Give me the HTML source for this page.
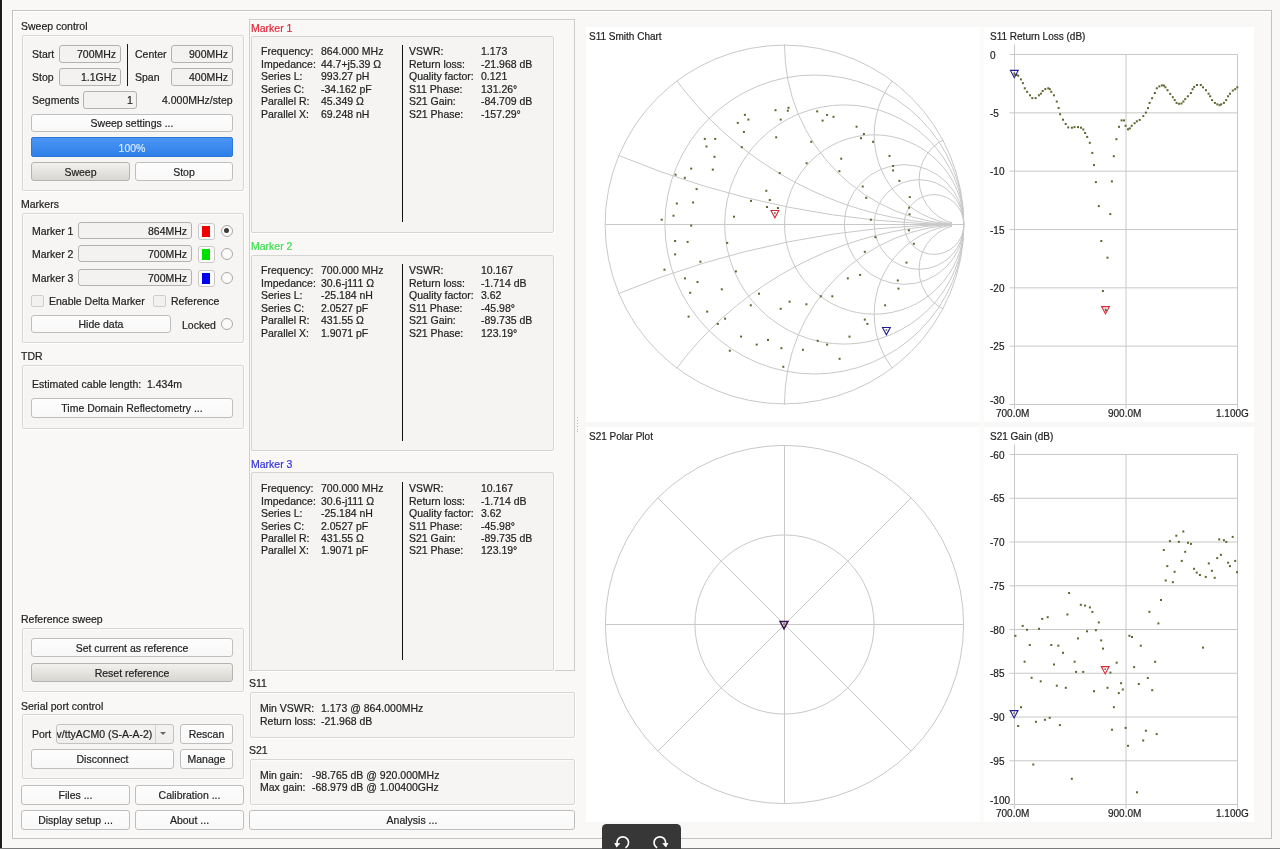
<!DOCTYPE html>
<html><head><meta charset="utf-8"><style>
html,body{margin:0;padding:0}
body{width:1280px;height:849px;position:relative;overflow:hidden;background:#f9f8f7;font-family:"Liberation Sans",sans-serif;font-size:10.5px;color:#222222;-webkit-font-smoothing:antialiased}
div{-webkit-text-stroke:0.2px currentColor}
</style></head><body>
<div style="position:absolute;left:0;top:0;width:2px;height:849px;background:#1d1b19"></div><div style="position:absolute;left:2px;top:0;width:1px;height:848px;background:#fdfdfd"></div><div style="position:absolute;left:0;top:848px;width:1280px;height:1px;background:#7a7a7a"></div><div style="position:absolute;left:12px;top:10px;width:1260px;height:829px;box-sizing:border-box;border:1px solid #c4c3c2"></div><div style="position:absolute;left:13px;top:11px;width:1258px;height:827px;box-sizing:border-box;border-top:1px solid #ffffff;border-left:1px solid #ffffff"></div><div style="position:absolute;left:21px;top:18.80px;line-height:14px;font-size:10.5px;color:#222222;white-space:pre;will-change:transform;">Sweep control</div><div style="position:absolute;left:22px;top:35px;width:222px;height:156px;box-sizing:border-box;border:1px solid #d8d7d6;background:#f6f5f4;border-radius:2px;box-shadow:1px 1px 0 #ffffff, inset 1px 1px 0 #fbfbfa"></div><div style="position:absolute;left:31.5px;top:46.75px;line-height:14px;font-size:10.5px;color:#222222;white-space:pre;will-change:transform;">Start</div><div style="position:absolute;left:59px;top:45px;width:62px;height:18px;box-sizing:border-box;border:1px solid #b3b2b1;background:#f3f2f1;border-radius:3px"></div><div style="position:absolute;right:1163.5px;top:47.00px;line-height:14px;font-size:10.5px;color:#222222;white-space:pre;text-align:right;will-change:transform;">700MHz</div><div style="position:absolute;left:31.5px;top:69.75px;line-height:14px;font-size:10.5px;color:#222222;white-space:pre;will-change:transform;">Stop</div><div style="position:absolute;left:59px;top:68px;width:62px;height:18px;box-sizing:border-box;border:1px solid #b3b2b1;background:#f3f2f1;border-radius:3px"></div><div style="position:absolute;right:1163.5px;top:70.00px;line-height:14px;font-size:10.5px;color:#222222;white-space:pre;text-align:right;will-change:transform;">1.1GHz</div><div style="position:absolute;left:127px;top:44px;width:1px;height:42px;box-sizing:border-box;background:#1a1a1a"></div><div style="position:absolute;left:134.5px;top:46.75px;line-height:14px;font-size:10.5px;color:#222222;white-space:pre;will-change:transform;">Center</div><div style="position:absolute;left:171px;top:45px;width:62px;height:18px;box-sizing:border-box;border:1px solid #b3b2b1;background:#f3f2f1;border-radius:3px"></div><div style="position:absolute;right:1051.5px;top:47.00px;line-height:14px;font-size:10.5px;color:#222222;white-space:pre;text-align:right;will-change:transform;">900MHz</div><div style="position:absolute;left:134.5px;top:69.75px;line-height:14px;font-size:10.5px;color:#222222;white-space:pre;will-change:transform;">Span</div><div style="position:absolute;left:171px;top:68px;width:62px;height:18px;box-sizing:border-box;border:1px solid #b3b2b1;background:#f3f2f1;border-radius:3px"></div><div style="position:absolute;right:1051.5px;top:70.00px;line-height:14px;font-size:10.5px;color:#222222;white-space:pre;text-align:right;will-change:transform;">400MHz</div><div style="position:absolute;left:31.5px;top:93.00px;line-height:14px;font-size:10.5px;color:#222222;white-space:pre;will-change:transform;">Segments</div><div style="position:absolute;left:83px;top:91px;width:54px;height:18px;box-sizing:border-box;border:1px solid #b3b2b1;background:#f3f2f1;border-radius:3px"></div><div style="position:absolute;right:1147.5px;top:93.00px;line-height:14px;font-size:10.5px;color:#222222;white-space:pre;text-align:right;will-change:transform;">1</div><div style="position:absolute;right:1047.5px;top:93.00px;line-height:14px;font-size:10.5px;color:#222222;white-space:pre;text-align:right;will-change:transform;">4.000MHz/step</div><div style="position:absolute;left:31px;top:114px;width:202px;height:18px;box-sizing:border-box;border:1px solid #bfbebd;background:linear-gradient(#fdfdfd,#f8f8f8);border-radius:3px"></div><div style="position:absolute;left:31px;width:202px;top:116.00px;line-height:14px;font-size:10.5px;color:#222222;white-space:pre;text-align:center;will-change:transform;">Sweep settings ...</div><div style="position:absolute;left:31px;top:137px;width:202px;height:20px;box-sizing:border-box;background:linear-gradient(#4b96f4,#2f7fe9);border:1px solid #2c76dc;border-radius:2px"></div><div style="position:absolute;left:31px;width:202px;top:140.50px;line-height:14px;font-size:10.5px;color:#d6e9ff;white-space:pre;text-align:center;will-change:transform;">100%</div><div style="position:absolute;left:31px;top:162px;width:99px;height:19px;box-sizing:border-box;border:1px solid #b5b4b3;background:linear-gradient(#f2f1ee,#d8d6d1);border-radius:3px"></div><div style="position:absolute;left:31px;width:99px;top:164.50px;line-height:14px;font-size:10.5px;color:#222222;white-space:pre;text-align:center;will-change:transform;">Sweep</div><div style="position:absolute;left:135px;top:162px;width:98px;height:19px;box-sizing:border-box;border:1px solid #bfbebd;background:linear-gradient(#fdfdfd,#f8f8f8);border-radius:3px"></div><div style="position:absolute;left:135px;width:98px;top:164.50px;line-height:14px;font-size:10.5px;color:#222222;white-space:pre;text-align:center;will-change:transform;">Stop</div><div style="position:absolute;left:21px;top:196.75px;line-height:14px;font-size:10.5px;color:#222222;white-space:pre;will-change:transform;">Markers</div><div style="position:absolute;left:22px;top:213px;width:222px;height:130px;box-sizing:border-box;border:1px solid #d8d7d6;background:#f6f5f4;border-radius:2px;box-shadow:1px 1px 0 #ffffff, inset 1px 1px 0 #fbfbfa"></div><div style="position:absolute;left:31.5px;top:223.50px;line-height:14px;font-size:10.5px;color:#222222;white-space:pre;will-change:transform;">Marker 1</div><div style="position:absolute;left:78px;top:222px;width:114px;height:17px;box-sizing:border-box;border:1px solid #b3b2b1;background:#f3f2f1;border-radius:3px"></div><div style="position:absolute;right:1092.5px;top:223.50px;line-height:14px;font-size:10.5px;color:#222222;white-space:pre;text-align:right;will-change:transform;">864MHz</div><div style="position:absolute;left:198px;top:223px;width:17px;height:17px;box-sizing:border-box;border:1px solid #c9c8c7;background:#fdfdfd;border-radius:3px"></div><div style="position:absolute;left:202px;top:226px;width:8px;height:11px;box-sizing:border-box;background:#f00000"></div><div style="position:absolute;left:220.8px;top:224.5px;width:12px;height:12px;box-sizing:border-box;border:1px solid #a9a8a7;border-radius:50%;background:#fafafa"></div><div style="position:absolute;left:224.3px;top:228.0px;width:5px;height:5px;border-radius:50%;background:#3a3a3a"></div><div style="position:absolute;left:31.5px;top:246.50px;line-height:14px;font-size:10.5px;color:#222222;white-space:pre;will-change:transform;">Marker 2</div><div style="position:absolute;left:78px;top:245px;width:114px;height:17px;box-sizing:border-box;border:1px solid #b3b2b1;background:#f3f2f1;border-radius:3px"></div><div style="position:absolute;right:1092.5px;top:246.50px;line-height:14px;font-size:10.5px;color:#222222;white-space:pre;text-align:right;will-change:transform;">700MHz</div><div style="position:absolute;left:198px;top:246px;width:17px;height:17px;box-sizing:border-box;border:1px solid #c9c8c7;background:#fdfdfd;border-radius:3px"></div><div style="position:absolute;left:202px;top:249px;width:8px;height:11px;box-sizing:border-box;background:#00e000"></div><div style="position:absolute;left:220.8px;top:247.5px;width:12px;height:12px;box-sizing:border-box;border:1px solid #a9a8a7;border-radius:50%;background:#fafafa"></div><div style="position:absolute;left:31.5px;top:270.50px;line-height:14px;font-size:10.5px;color:#222222;white-space:pre;will-change:transform;">Marker 3</div><div style="position:absolute;left:78px;top:269px;width:114px;height:17px;box-sizing:border-box;border:1px solid #b3b2b1;background:#f3f2f1;border-radius:3px"></div><div style="position:absolute;right:1092.5px;top:270.50px;line-height:14px;font-size:10.5px;color:#222222;white-space:pre;text-align:right;will-change:transform;">700MHz</div><div style="position:absolute;left:198px;top:270px;width:17px;height:17px;box-sizing:border-box;border:1px solid #c9c8c7;background:#fdfdfd;border-radius:3px"></div><div style="position:absolute;left:202px;top:273px;width:8px;height:11px;box-sizing:border-box;background:#0000f0"></div><div style="position:absolute;left:220.8px;top:271.5px;width:12px;height:12px;box-sizing:border-box;border:1px solid #a9a8a7;border-radius:50%;background:#fafafa"></div><div style="position:absolute;left:31px;top:295px;width:13px;height:12px;box-sizing:border-box;border:1px solid #cfcecd;background:#f2f1f0;border-radius:2px"></div><div style="position:absolute;left:48.5px;top:294.00px;line-height:14px;font-size:10.5px;color:#222222;white-space:pre;will-change:transform;">Enable Delta Marker</div><div style="position:absolute;left:153px;top:295px;width:13px;height:12px;box-sizing:border-box;border:1px solid #cfcecd;background:#f2f1f0;border-radius:2px"></div><div style="position:absolute;left:170.5px;top:294.00px;line-height:14px;font-size:10.5px;color:#222222;white-space:pre;will-change:transform;">Reference</div><div style="position:absolute;left:31px;top:315px;width:140px;height:18px;box-sizing:border-box;border:1px solid #bfbebd;background:linear-gradient(#fdfdfd,#f8f8f8);border-radius:3px"></div><div style="position:absolute;left:31px;width:140px;top:317.00px;line-height:14px;font-size:10.5px;color:#222222;white-space:pre;text-align:center;will-change:transform;">Hide data</div><div style="position:absolute;left:181.5px;top:317.50px;line-height:14px;font-size:10.5px;color:#222222;white-space:pre;will-change:transform;">Locked</div><div style="position:absolute;left:220.8px;top:318px;width:12px;height:12px;box-sizing:border-box;border:1px solid #a9a8a7;border-radius:50%;background:#fafafa"></div><div style="position:absolute;left:21px;top:349.00px;line-height:14px;font-size:10.5px;color:#222222;white-space:pre;will-change:transform;">TDR</div><div style="position:absolute;left:22px;top:365px;width:222px;height:64px;box-sizing:border-box;border:1px solid #d8d7d6;background:#f6f5f4;border-radius:2px;box-shadow:1px 1px 0 #ffffff, inset 1px 1px 0 #fbfbfa"></div><div style="position:absolute;left:31.5px;top:377.00px;line-height:14px;font-size:10.5px;color:#222222;white-space:pre;will-change:transform;">Estimated cable length:  1.434m</div><div style="position:absolute;left:31px;top:398px;width:202px;height:20px;box-sizing:border-box;border:1px solid #bfbebd;background:linear-gradient(#fdfdfd,#f8f8f8);border-radius:3px"></div><div style="position:absolute;left:31px;width:202px;top:401.00px;line-height:14px;font-size:10.5px;color:#222222;white-space:pre;text-align:center;will-change:transform;">Time Domain Reflectometry ...</div><div style="position:absolute;left:21px;top:612.00px;line-height:14px;font-size:10.5px;color:#222222;white-space:pre;will-change:transform;">Reference sweep</div><div style="position:absolute;left:22px;top:628px;width:222px;height:64px;box-sizing:border-box;border:1px solid #d8d7d6;background:#f6f5f4;border-radius:2px;box-shadow:1px 1px 0 #ffffff, inset 1px 1px 0 #fbfbfa"></div><div style="position:absolute;left:31px;top:638px;width:202px;height:19px;box-sizing:border-box;border:1px solid #bfbebd;background:linear-gradient(#fdfdfd,#f8f8f8);border-radius:3px"></div><div style="position:absolute;left:31px;width:202px;top:640.50px;line-height:14px;font-size:10.5px;color:#222222;white-space:pre;text-align:center;will-change:transform;">Set current as reference</div><div style="position:absolute;left:31px;top:663px;width:202px;height:19px;box-sizing:border-box;border:1px solid #b5b4b3;background:linear-gradient(#f2f1ee,#d8d6d1);border-radius:3px"></div><div style="position:absolute;left:31px;width:202px;top:665.50px;line-height:14px;font-size:10.5px;color:#222222;white-space:pre;text-align:center;will-change:transform;">Reset reference</div><div style="position:absolute;left:21px;top:699.00px;line-height:14px;font-size:10.5px;color:#222222;white-space:pre;will-change:transform;">Serial port control</div><div style="position:absolute;left:22px;top:714px;width:222px;height:65px;box-sizing:border-box;border:1px solid #d8d7d6;background:#f6f5f4;border-radius:2px;box-shadow:1px 1px 0 #ffffff, inset 1px 1px 0 #fbfbfa"></div><div style="position:absolute;left:31.5px;top:727.00px;line-height:14px;font-size:10.5px;color:#222222;white-space:pre;will-change:transform;">Port</div><div style="position:absolute;left:56px;top:724px;width:118px;height:20px;box-sizing:border-box;border:1px solid #c3c2c1;background:linear-gradient(#f4f3f2,#efeeed);border-radius:3px"></div><div style="position:absolute;left:57px;top:725px;width:95px;height:18px;overflow:hidden"><div style="position:absolute;right:0;top:2px;line-height:14px;font-size:10.5px;color:#222;white-space:pre;will-change:transform">/dev/ttyACM0 (S-A-A-2)</div></div><div style="position:absolute;left:155px;top:725px;width:1px;height:18px;box-sizing:border-box;background:#d0cfce"></div><div style="position:absolute;left:160px;top:732px;width:0;height:0;border-left:3.5px solid transparent;border-right:3.5px solid transparent;border-top:3.5px solid #666"></div><div style="position:absolute;left:180px;top:724px;width:53px;height:20px;box-sizing:border-box;border:1px solid #bfbebd;background:linear-gradient(#fdfdfd,#f8f8f8);border-radius:3px"></div><div style="position:absolute;left:180px;width:53px;top:727.00px;line-height:14px;font-size:10.5px;color:#222222;white-space:pre;text-align:center;will-change:transform;">Rescan</div><div style="position:absolute;left:31px;top:749px;width:143px;height:20px;box-sizing:border-box;border:1px solid #bfbebd;background:linear-gradient(#fdfdfd,#f8f8f8);border-radius:3px"></div><div style="position:absolute;left:31px;width:143px;top:752.00px;line-height:14px;font-size:10.5px;color:#222222;white-space:pre;text-align:center;will-change:transform;">Disconnect</div><div style="position:absolute;left:180px;top:749px;width:53px;height:20px;box-sizing:border-box;border:1px solid #bfbebd;background:linear-gradient(#fdfdfd,#f8f8f8);border-radius:3px"></div><div style="position:absolute;left:180px;width:53px;top:752.00px;line-height:14px;font-size:10.5px;color:#222222;white-space:pre;text-align:center;will-change:transform;">Manage</div><div style="position:absolute;left:21px;top:785px;width:109px;height:20px;box-sizing:border-box;border:1px solid #bfbebd;background:linear-gradient(#fdfdfd,#f8f8f8);border-radius:3px"></div><div style="position:absolute;left:21px;width:109px;top:788.00px;line-height:14px;font-size:10.5px;color:#222222;white-space:pre;text-align:center;will-change:transform;">Files ...</div><div style="position:absolute;left:135px;top:785px;width:109px;height:20px;box-sizing:border-box;border:1px solid #bfbebd;background:linear-gradient(#fdfdfd,#f8f8f8);border-radius:3px"></div><div style="position:absolute;left:135px;width:109px;top:788.00px;line-height:14px;font-size:10.5px;color:#222222;white-space:pre;text-align:center;will-change:transform;">Calibration ...</div><div style="position:absolute;left:21px;top:810px;width:109px;height:20px;box-sizing:border-box;border:1px solid #bfbebd;background:linear-gradient(#fdfdfd,#f8f8f8);border-radius:3px"></div><div style="position:absolute;left:21px;width:109px;top:813.00px;line-height:14px;font-size:10.5px;color:#222222;white-space:pre;text-align:center;will-change:transform;">Display setup ...</div><div style="position:absolute;left:135px;top:810px;width:109px;height:20px;box-sizing:border-box;border:1px solid #bfbebd;background:linear-gradient(#fdfdfd,#f8f8f8);border-radius:3px"></div><div style="position:absolute;left:135px;width:109px;top:813.00px;line-height:14px;font-size:10.5px;color:#222222;white-space:pre;text-align:center;will-change:transform;">About ...</div><div style="position:absolute;left:249px;top:19px;width:326px;height:652px;box-sizing:border-box;border:1px solid #cfcecd;background:#f9f8f7"></div><div style="position:absolute;left:251.2px;top:20.60px;line-height:14px;font-size:10.5px;color:#e0283a;white-space:pre;will-change:transform;">Marker 1</div><div style="position:absolute;left:251px;top:36px;width:303px;height:197px;box-sizing:border-box;border:1px solid #d6d5d4;background:#f5f4f3;border-radius:2px;box-shadow:1px 1px 0 #ffffff"></div><div style="position:absolute;left:261px;top:44.40px;line-height:14px;font-size:10.5px;color:#222222;white-space:pre;will-change:transform;">Frequency:</div><div style="position:absolute;left:321px;top:44.40px;line-height:14px;font-size:10.5px;color:#222222;white-space:pre;will-change:transform;">864.000 MHz</div><div style="position:absolute;left:409px;top:44.40px;line-height:14px;font-size:10.5px;color:#222222;white-space:pre;will-change:transform;">VSWR:</div><div style="position:absolute;left:480.5px;top:44.40px;line-height:14px;font-size:10.5px;color:#222222;white-space:pre;will-change:transform;">1.173</div><div style="position:absolute;left:261px;top:56.85px;line-height:14px;font-size:10.5px;color:#222222;white-space:pre;will-change:transform;">Impedance:</div><div style="position:absolute;left:321px;top:56.85px;line-height:14px;font-size:10.5px;color:#222222;white-space:pre;will-change:transform;">44.7+j5.39 Ω</div><div style="position:absolute;left:409px;top:56.85px;line-height:14px;font-size:10.5px;color:#222222;white-space:pre;will-change:transform;">Return loss:</div><div style="position:absolute;left:480.5px;top:56.85px;line-height:14px;font-size:10.5px;color:#222222;white-space:pre;will-change:transform;">-21.968 dB</div><div style="position:absolute;left:261px;top:69.30px;line-height:14px;font-size:10.5px;color:#222222;white-space:pre;will-change:transform;">Series L:</div><div style="position:absolute;left:321px;top:69.30px;line-height:14px;font-size:10.5px;color:#222222;white-space:pre;will-change:transform;">993.27 pH</div><div style="position:absolute;left:409px;top:69.30px;line-height:14px;font-size:10.5px;color:#222222;white-space:pre;will-change:transform;">Quality factor:</div><div style="position:absolute;left:480.5px;top:69.30px;line-height:14px;font-size:10.5px;color:#222222;white-space:pre;will-change:transform;">0.121</div><div style="position:absolute;left:261px;top:81.75px;line-height:14px;font-size:10.5px;color:#222222;white-space:pre;will-change:transform;">Series C:</div><div style="position:absolute;left:321px;top:81.75px;line-height:14px;font-size:10.5px;color:#222222;white-space:pre;will-change:transform;">-34.162 pF</div><div style="position:absolute;left:409px;top:81.75px;line-height:14px;font-size:10.5px;color:#222222;white-space:pre;will-change:transform;">S11 Phase:</div><div style="position:absolute;left:480.5px;top:81.75px;line-height:14px;font-size:10.5px;color:#222222;white-space:pre;will-change:transform;">131.26°</div><div style="position:absolute;left:261px;top:94.20px;line-height:14px;font-size:10.5px;color:#222222;white-space:pre;will-change:transform;">Parallel R:</div><div style="position:absolute;left:321px;top:94.20px;line-height:14px;font-size:10.5px;color:#222222;white-space:pre;will-change:transform;">45.349 Ω</div><div style="position:absolute;left:409px;top:94.20px;line-height:14px;font-size:10.5px;color:#222222;white-space:pre;will-change:transform;">S21 Gain:</div><div style="position:absolute;left:480.5px;top:94.20px;line-height:14px;font-size:10.5px;color:#222222;white-space:pre;will-change:transform;">-84.709 dB</div><div style="position:absolute;left:261px;top:106.65px;line-height:14px;font-size:10.5px;color:#222222;white-space:pre;will-change:transform;">Parallel X:</div><div style="position:absolute;left:321px;top:106.65px;line-height:14px;font-size:10.5px;color:#222222;white-space:pre;will-change:transform;">69.248 nH</div><div style="position:absolute;left:409px;top:106.65px;line-height:14px;font-size:10.5px;color:#222222;white-space:pre;will-change:transform;">S21 Phase:</div><div style="position:absolute;left:480.5px;top:106.65px;line-height:14px;font-size:10.5px;color:#222222;white-space:pre;will-change:transform;">-157.29°</div><div style="position:absolute;left:402px;top:45px;width:1px;height:177px;box-sizing:border-box;background:#111"></div><div style="position:absolute;left:251.2px;top:239.40px;line-height:14px;font-size:10.5px;color:#3ee050;white-space:pre;will-change:transform;">Marker 2</div><div style="position:absolute;left:251px;top:255px;width:303px;height:196px;box-sizing:border-box;border:1px solid #d6d5d4;background:#f5f4f3;border-radius:2px;box-shadow:1px 1px 0 #ffffff"></div><div style="position:absolute;left:261px;top:263.30px;line-height:14px;font-size:10.5px;color:#222222;white-space:pre;will-change:transform;">Frequency:</div><div style="position:absolute;left:321px;top:263.30px;line-height:14px;font-size:10.5px;color:#222222;white-space:pre;will-change:transform;">700.000 MHz</div><div style="position:absolute;left:409px;top:263.30px;line-height:14px;font-size:10.5px;color:#222222;white-space:pre;will-change:transform;">VSWR:</div><div style="position:absolute;left:480.5px;top:263.30px;line-height:14px;font-size:10.5px;color:#222222;white-space:pre;will-change:transform;">10.167</div><div style="position:absolute;left:261px;top:275.75px;line-height:14px;font-size:10.5px;color:#222222;white-space:pre;will-change:transform;">Impedance:</div><div style="position:absolute;left:321px;top:275.75px;line-height:14px;font-size:10.5px;color:#222222;white-space:pre;will-change:transform;">30.6-j111 Ω</div><div style="position:absolute;left:409px;top:275.75px;line-height:14px;font-size:10.5px;color:#222222;white-space:pre;will-change:transform;">Return loss:</div><div style="position:absolute;left:480.5px;top:275.75px;line-height:14px;font-size:10.5px;color:#222222;white-space:pre;will-change:transform;">-1.714 dB</div><div style="position:absolute;left:261px;top:288.20px;line-height:14px;font-size:10.5px;color:#222222;white-space:pre;will-change:transform;">Series L:</div><div style="position:absolute;left:321px;top:288.20px;line-height:14px;font-size:10.5px;color:#222222;white-space:pre;will-change:transform;">-25.184 nH</div><div style="position:absolute;left:409px;top:288.20px;line-height:14px;font-size:10.5px;color:#222222;white-space:pre;will-change:transform;">Quality factor:</div><div style="position:absolute;left:480.5px;top:288.20px;line-height:14px;font-size:10.5px;color:#222222;white-space:pre;will-change:transform;">3.62</div><div style="position:absolute;left:261px;top:300.65px;line-height:14px;font-size:10.5px;color:#222222;white-space:pre;will-change:transform;">Series C:</div><div style="position:absolute;left:321px;top:300.65px;line-height:14px;font-size:10.5px;color:#222222;white-space:pre;will-change:transform;">2.0527 pF</div><div style="position:absolute;left:409px;top:300.65px;line-height:14px;font-size:10.5px;color:#222222;white-space:pre;will-change:transform;">S11 Phase:</div><div style="position:absolute;left:480.5px;top:300.65px;line-height:14px;font-size:10.5px;color:#222222;white-space:pre;will-change:transform;">-45.98°</div><div style="position:absolute;left:261px;top:313.10px;line-height:14px;font-size:10.5px;color:#222222;white-space:pre;will-change:transform;">Parallel R:</div><div style="position:absolute;left:321px;top:313.10px;line-height:14px;font-size:10.5px;color:#222222;white-space:pre;will-change:transform;">431.55 Ω</div><div style="position:absolute;left:409px;top:313.10px;line-height:14px;font-size:10.5px;color:#222222;white-space:pre;will-change:transform;">S21 Gain:</div><div style="position:absolute;left:480.5px;top:313.10px;line-height:14px;font-size:10.5px;color:#222222;white-space:pre;will-change:transform;">-89.735 dB</div><div style="position:absolute;left:261px;top:325.55px;line-height:14px;font-size:10.5px;color:#222222;white-space:pre;will-change:transform;">Parallel X:</div><div style="position:absolute;left:321px;top:325.55px;line-height:14px;font-size:10.5px;color:#222222;white-space:pre;will-change:transform;">1.9071 pF</div><div style="position:absolute;left:409px;top:325.55px;line-height:14px;font-size:10.5px;color:#222222;white-space:pre;will-change:transform;">S21 Phase:</div><div style="position:absolute;left:480.5px;top:325.55px;line-height:14px;font-size:10.5px;color:#222222;white-space:pre;will-change:transform;">123.19°</div><div style="position:absolute;left:402px;top:264px;width:1px;height:177px;box-sizing:border-box;background:#111"></div><div style="position:absolute;left:251.2px;top:457.20px;line-height:14px;font-size:10.5px;color:#3333d8;white-space:pre;will-change:transform;">Marker 3</div><div style="position:absolute;left:251px;top:472px;width:303px;height:199px;box-sizing:border-box;border:1px solid #d6d5d4;background:#f5f4f3;border-radius:2px;box-shadow:1px 1px 0 #ffffff"></div><div style="position:absolute;left:261px;top:481.20px;line-height:14px;font-size:10.5px;color:#222222;white-space:pre;will-change:transform;">Frequency:</div><div style="position:absolute;left:321px;top:481.20px;line-height:14px;font-size:10.5px;color:#222222;white-space:pre;will-change:transform;">700.000 MHz</div><div style="position:absolute;left:409px;top:481.20px;line-height:14px;font-size:10.5px;color:#222222;white-space:pre;will-change:transform;">VSWR:</div><div style="position:absolute;left:480.5px;top:481.20px;line-height:14px;font-size:10.5px;color:#222222;white-space:pre;will-change:transform;">10.167</div><div style="position:absolute;left:261px;top:493.65px;line-height:14px;font-size:10.5px;color:#222222;white-space:pre;will-change:transform;">Impedance:</div><div style="position:absolute;left:321px;top:493.65px;line-height:14px;font-size:10.5px;color:#222222;white-space:pre;will-change:transform;">30.6-j111 Ω</div><div style="position:absolute;left:409px;top:493.65px;line-height:14px;font-size:10.5px;color:#222222;white-space:pre;will-change:transform;">Return loss:</div><div style="position:absolute;left:480.5px;top:493.65px;line-height:14px;font-size:10.5px;color:#222222;white-space:pre;will-change:transform;">-1.714 dB</div><div style="position:absolute;left:261px;top:506.10px;line-height:14px;font-size:10.5px;color:#222222;white-space:pre;will-change:transform;">Series L:</div><div style="position:absolute;left:321px;top:506.10px;line-height:14px;font-size:10.5px;color:#222222;white-space:pre;will-change:transform;">-25.184 nH</div><div style="position:absolute;left:409px;top:506.10px;line-height:14px;font-size:10.5px;color:#222222;white-space:pre;will-change:transform;">Quality factor:</div><div style="position:absolute;left:480.5px;top:506.10px;line-height:14px;font-size:10.5px;color:#222222;white-space:pre;will-change:transform;">3.62</div><div style="position:absolute;left:261px;top:518.55px;line-height:14px;font-size:10.5px;color:#222222;white-space:pre;will-change:transform;">Series C:</div><div style="position:absolute;left:321px;top:518.55px;line-height:14px;font-size:10.5px;color:#222222;white-space:pre;will-change:transform;">2.0527 pF</div><div style="position:absolute;left:409px;top:518.55px;line-height:14px;font-size:10.5px;color:#222222;white-space:pre;will-change:transform;">S11 Phase:</div><div style="position:absolute;left:480.5px;top:518.55px;line-height:14px;font-size:10.5px;color:#222222;white-space:pre;will-change:transform;">-45.98°</div><div style="position:absolute;left:261px;top:531.00px;line-height:14px;font-size:10.5px;color:#222222;white-space:pre;will-change:transform;">Parallel R:</div><div style="position:absolute;left:321px;top:531.00px;line-height:14px;font-size:10.5px;color:#222222;white-space:pre;will-change:transform;">431.55 Ω</div><div style="position:absolute;left:409px;top:531.00px;line-height:14px;font-size:10.5px;color:#222222;white-space:pre;will-change:transform;">S21 Gain:</div><div style="position:absolute;left:480.5px;top:531.00px;line-height:14px;font-size:10.5px;color:#222222;white-space:pre;will-change:transform;">-89.735 dB</div><div style="position:absolute;left:261px;top:543.45px;line-height:14px;font-size:10.5px;color:#222222;white-space:pre;will-change:transform;">Parallel X:</div><div style="position:absolute;left:321px;top:543.45px;line-height:14px;font-size:10.5px;color:#222222;white-space:pre;will-change:transform;">1.9071 pF</div><div style="position:absolute;left:409px;top:543.45px;line-height:14px;font-size:10.5px;color:#222222;white-space:pre;will-change:transform;">S21 Phase:</div><div style="position:absolute;left:480.5px;top:543.45px;line-height:14px;font-size:10.5px;color:#222222;white-space:pre;will-change:transform;">123.19°</div><div style="position:absolute;left:402px;top:482px;width:1px;height:178px;box-sizing:border-box;background:#111"></div><div style="position:absolute;left:248.8px;top:676.20px;line-height:14px;font-size:10.5px;color:#222222;white-space:pre;will-change:transform;">S11</div><div style="position:absolute;left:250px;top:692px;width:325px;height:46px;box-sizing:border-box;border:1px solid #d8d7d6;background:#f6f5f4;border-radius:2px;box-shadow:1px 1px 0 #ffffff, inset 1px 1px 0 #fbfbfa"></div><div style="position:absolute;left:259.8px;top:701.40px;line-height:14px;font-size:10.5px;color:#222222;white-space:pre;will-change:transform;">Min VSWR:</div><div style="position:absolute;left:321px;top:701.40px;line-height:14px;font-size:10.5px;color:#222222;white-space:pre;will-change:transform;">1.173 @ 864.000MHz</div><div style="position:absolute;left:259.8px;top:713.70px;line-height:14px;font-size:10.5px;color:#222222;white-space:pre;will-change:transform;">Return loss:</div><div style="position:absolute;left:321px;top:713.70px;line-height:14px;font-size:10.5px;color:#222222;white-space:pre;will-change:transform;">-21.968 dB</div><div style="position:absolute;left:248.8px;top:743.20px;line-height:14px;font-size:10.5px;color:#222222;white-space:pre;will-change:transform;">S21</div><div style="position:absolute;left:250px;top:759px;width:325px;height:46px;box-sizing:border-box;border:1px solid #d8d7d6;background:#f6f5f4;border-radius:2px;box-shadow:1px 1px 0 #ffffff, inset 1px 1px 0 #fbfbfa"></div><div style="position:absolute;left:259.8px;top:767.80px;line-height:14px;font-size:10.5px;color:#222222;white-space:pre;will-change:transform;">Min gain:</div><div style="position:absolute;left:311.6px;top:767.80px;line-height:14px;font-size:10.5px;color:#222222;white-space:pre;will-change:transform;">-98.765 dB @ 920.000MHz</div><div style="position:absolute;left:259.8px;top:780.40px;line-height:14px;font-size:10.5px;color:#222222;white-space:pre;will-change:transform;">Max gain:</div><div style="position:absolute;left:311.6px;top:780.40px;line-height:14px;font-size:10.5px;color:#222222;white-space:pre;will-change:transform;">-68.979 dB @ 1.00400GHz</div><div style="position:absolute;left:249px;top:810px;width:326px;height:20px;box-sizing:border-box;border:1px solid #bfbebd;background:linear-gradient(#fdfdfd,#f8f8f8);border-radius:3px"></div><div style="position:absolute;left:249px;width:326px;top:813.00px;line-height:14px;font-size:10.5px;color:#222222;white-space:pre;text-align:center;will-change:transform;">Analysis ...</div><div style="position:absolute;left:586px;top:26.5px;width:394px;height:395.5px;box-sizing:border-box;background:#ffffff"></div><div style="position:absolute;left:984px;top:26.5px;width:270px;height:395.5px;box-sizing:border-box;background:#ffffff"></div><div style="position:absolute;left:586px;top:427px;width:394px;height:395px;box-sizing:border-box;background:#ffffff"></div><div style="position:absolute;left:984px;top:427px;width:270px;height:395px;box-sizing:border-box;background:#ffffff"></div><div style="position:absolute;left:980px;top:26.5px;width:4px;height:795.5px;box-sizing:border-box;background:#fbfbfa"></div><svg style="position:absolute;left:0;top:0" width="1280" height="849"><defs><clipPath id="sc"><circle cx="784.5" cy="224.5" r="179.9"/></clipPath></defs><circle cx="784.5" cy="224.5" r="179.4" fill="none" stroke="#c8c8c8" stroke-width="1"/><line x1="605.1" y1="224.5" x2="963.9" y2="224.5" fill="none" stroke="#c8c8c8" stroke-width="1"/><g clip-path="url(#sc)"><circle cx="814.40" cy="224.5" r="149.50" fill="none" stroke="#c8c8c8" stroke-width="1"/><circle cx="844.30" cy="224.5" r="119.60" fill="none" stroke="#c8c8c8" stroke-width="1"/><circle cx="874.20" cy="224.5" r="89.70" fill="none" stroke="#c8c8c8" stroke-width="1"/><circle cx="904.10" cy="224.5" r="59.80" fill="none" stroke="#c8c8c8" stroke-width="1"/><circle cx="919.05" cy="224.5" r="44.85" fill="none" stroke="#c8c8c8" stroke-width="1"/><circle cx="934.00" cy="224.5" r="29.90" fill="none" stroke="#c8c8c8" stroke-width="1"/></g><mask id="xm"><rect x="0" y="0" width="1280" height="849" fill="#fff"/><circle cx="963.9" cy="224.5" r="12" fill="#000"/></mask><g clip-path="url(#sc)"><g mask="url(#xm)"><circle cx="963.9" cy="-672.50" r="897.00" fill="none" stroke="#c8c8c8" stroke-width="1"/><circle cx="963.9" cy="1121.50" r="897.00" fill="none" stroke="#c8c8c8" stroke-width="1"/><circle cx="963.9" cy="-134.30" r="358.80" fill="none" stroke="#c8c8c8" stroke-width="1"/><circle cx="963.9" cy="583.30" r="358.80" fill="none" stroke="#c8c8c8" stroke-width="1"/><circle cx="963.9" cy="45.10" r="179.40" fill="none" stroke="#c8c8c8" stroke-width="1"/><circle cx="963.9" cy="403.90" r="179.40" fill="none" stroke="#c8c8c8" stroke-width="1"/><circle cx="963.9" cy="134.80" r="89.70" fill="none" stroke="#c8c8c8" stroke-width="1"/><circle cx="963.9" cy="314.20" r="89.70" fill="none" stroke="#c8c8c8" stroke-width="1"/><circle cx="963.9" cy="179.65" r="44.85" fill="none" stroke="#c8c8c8" stroke-width="1"/><circle cx="963.9" cy="269.35" r="44.85" fill="none" stroke="#c8c8c8" stroke-width="1"/></g></g></svg><div style="position:absolute;left:589px;top:29.50px;line-height:14px;font-size:10px;color:#222222;white-space:pre;will-change:transform;">S11 Smith Chart</div><svg style="position:absolute;left:0;top:0" width="1280" height="849"><circle cx="784.5" cy="624.5" r="179.1" fill="none" stroke="#c8c8c8" stroke-width="1"/><circle cx="784.5" cy="624.5" r="89.55" fill="none" stroke="#c8c8c8" stroke-width="1"/><line x1="605.4" y1="624.5" x2="963.6" y2="624.5" fill="none" stroke="#c8c8c8" stroke-width="1"/><line x1="784.5" y1="445.4" x2="784.5" y2="803.6" fill="none" stroke="#c8c8c8" stroke-width="1"/><line x1="657.8571754894894" y1="497.85717548948935" x2="911.1428245105106" y2="751.1428245105106" fill="none" stroke="#c8c8c8" stroke-width="1"/><line x1="657.8571754894894" y1="751.1428245105106" x2="911.1428245105106" y2="497.85717548948935" fill="none" stroke="#c8c8c8" stroke-width="1"/></svg><div style="position:absolute;left:589px;top:429.50px;line-height:14px;font-size:10px;color:#222222;white-space:pre;will-change:transform;">S21 Polar Plot</div><svg style="position:absolute;left:0;top:0" width="1280" height="849"><line x1="1014.5" y1="44.5" x2="1014.5" y2="408.5" stroke="#c8c8c8" stroke-width="1"/><line x1="1126.0" y1="54.5" x2="1126.0" y2="408.5" stroke="#c8c8c8" stroke-width="1"/><line x1="1237.5" y1="54.5" x2="1237.5" y2="408.5" stroke="#c8c8c8" stroke-width="1"/><line x1="1009.5" y1="54.5" x2="1237.5" y2="54.5" stroke="#c8c8c8" stroke-width="1"/><line x1="1009.5" y1="112.83333333333334" x2="1237.5" y2="112.83333333333334" stroke="#c8c8c8" stroke-width="1"/><line x1="1009.5" y1="171.16666666666669" x2="1237.5" y2="171.16666666666669" stroke="#c8c8c8" stroke-width="1"/><line x1="1009.5" y1="229.5" x2="1237.5" y2="229.5" stroke="#c8c8c8" stroke-width="1"/><line x1="1009.5" y1="287.83333333333337" x2="1237.5" y2="287.83333333333337" stroke="#c8c8c8" stroke-width="1"/><line x1="1009.5" y1="346.1666666666667" x2="1237.5" y2="346.1666666666667" stroke="#c8c8c8" stroke-width="1"/><line x1="1009.5" y1="404.5" x2="1237.5" y2="404.5" stroke="#c8c8c8" stroke-width="1"/></svg><div style="position:absolute;left:990px;top:29.50px;line-height:14px;font-size:10px;color:#222222;white-space:pre;will-change:transform;">S11 Return Loss (dB)</div><div style="position:absolute;left:990.3px;top:48.50px;line-height:14px;font-size:10px;color:#222222;white-space:pre;will-change:transform;">0</div><div style="position:absolute;left:990.3px;top:106.83px;line-height:14px;font-size:10px;color:#222222;white-space:pre;will-change:transform;">-5</div><div style="position:absolute;left:990.3px;top:165.17px;line-height:14px;font-size:10px;color:#222222;white-space:pre;will-change:transform;">-10</div><div style="position:absolute;left:990.3px;top:223.50px;line-height:14px;font-size:10px;color:#222222;white-space:pre;will-change:transform;">-15</div><div style="position:absolute;left:990.3px;top:281.83px;line-height:14px;font-size:10px;color:#222222;white-space:pre;will-change:transform;">-20</div><div style="position:absolute;left:990.3px;top:340.17px;line-height:14px;font-size:10px;color:#222222;white-space:pre;will-change:transform;">-25</div><div style="position:absolute;left:990.3px;top:394.00px;line-height:14px;font-size:10px;color:#222222;white-space:pre;will-change:transform;">-30</div><div style="position:absolute;left:996px;top:406.50px;line-height:14px;font-size:10px;color:#222222;white-space:pre;will-change:transform;">700.0M</div><div style="position:absolute;left:1108px;top:406.50px;line-height:14px;font-size:10px;color:#222222;white-space:pre;will-change:transform;">900.0M</div><div style="position:absolute;right:31px;top:406.50px;line-height:14px;font-size:10px;color:#222222;white-space:pre;text-align:right;will-change:transform;">1.100G</div><svg style="position:absolute;left:0;top:0" width="1280" height="849"><line x1="1014.5" y1="444.5" x2="1014.5" y2="808.5" stroke="#c8c8c8" stroke-width="1"/><line x1="1126.0" y1="454.5" x2="1126.0" y2="808.5" stroke="#c8c8c8" stroke-width="1"/><line x1="1237.5" y1="454.5" x2="1237.5" y2="808.5" stroke="#c8c8c8" stroke-width="1"/><line x1="1009.5" y1="454.5" x2="1237.5" y2="454.5" stroke="#c8c8c8" stroke-width="1"/><line x1="1009.5" y1="498.25" x2="1237.5" y2="498.25" stroke="#c8c8c8" stroke-width="1"/><line x1="1009.5" y1="542.0" x2="1237.5" y2="542.0" stroke="#c8c8c8" stroke-width="1"/><line x1="1009.5" y1="585.75" x2="1237.5" y2="585.75" stroke="#c8c8c8" stroke-width="1"/><line x1="1009.5" y1="629.5" x2="1237.5" y2="629.5" stroke="#c8c8c8" stroke-width="1"/><line x1="1009.5" y1="673.25" x2="1237.5" y2="673.25" stroke="#c8c8c8" stroke-width="1"/><line x1="1009.5" y1="717.0" x2="1237.5" y2="717.0" stroke="#c8c8c8" stroke-width="1"/><line x1="1009.5" y1="760.75" x2="1237.5" y2="760.75" stroke="#c8c8c8" stroke-width="1"/><line x1="1009.5" y1="804.5" x2="1237.5" y2="804.5" stroke="#c8c8c8" stroke-width="1"/></svg><div style="position:absolute;left:990px;top:429.50px;line-height:14px;font-size:10px;color:#222222;white-space:pre;will-change:transform;">S21 Gain (dB)</div><div style="position:absolute;left:990.3px;top:448.50px;line-height:14px;font-size:10px;color:#222222;white-space:pre;will-change:transform;">-60</div><div style="position:absolute;left:990.3px;top:492.25px;line-height:14px;font-size:10px;color:#222222;white-space:pre;will-change:transform;">-65</div><div style="position:absolute;left:990.3px;top:536.00px;line-height:14px;font-size:10px;color:#222222;white-space:pre;will-change:transform;">-70</div><div style="position:absolute;left:990.3px;top:579.75px;line-height:14px;font-size:10px;color:#222222;white-space:pre;will-change:transform;">-75</div><div style="position:absolute;left:990.3px;top:623.50px;line-height:14px;font-size:10px;color:#222222;white-space:pre;will-change:transform;">-80</div><div style="position:absolute;left:990.3px;top:667.25px;line-height:14px;font-size:10px;color:#222222;white-space:pre;will-change:transform;">-85</div><div style="position:absolute;left:990.3px;top:711.00px;line-height:14px;font-size:10px;color:#222222;white-space:pre;will-change:transform;">-90</div><div style="position:absolute;left:990.3px;top:754.75px;line-height:14px;font-size:10px;color:#222222;white-space:pre;will-change:transform;">-95</div><div style="position:absolute;left:990.3px;top:794.00px;line-height:14px;font-size:10px;color:#222222;white-space:pre;will-change:transform;">-100</div><div style="position:absolute;left:996px;top:806.50px;line-height:14px;font-size:10px;color:#222222;white-space:pre;will-change:transform;">700.0M</div><div style="position:absolute;left:1108px;top:806.50px;line-height:14px;font-size:10px;color:#222222;white-space:pre;will-change:transform;">900.0M</div><div style="position:absolute;right:31px;top:806.50px;line-height:14px;font-size:10px;color:#222222;white-space:pre;text-align:right;will-change:transform;">1.100G</div><svg style="position:absolute;left:0;top:0" width="1280" height="849"><rect x="774.5" y="109.2" width="2" height="2" fill="#62652f"/><rect x="787.5" y="106.8" width="2" height="2" fill="#62652f"/><rect x="786.8" y="109.7" width="2" height="2" fill="#62652f"/><rect x="779.7" y="118.6" width="2" height="2" fill="#62652f"/><rect x="743.9" y="113.9" width="2" height="2" fill="#62652f"/><rect x="747.4" y="118.6" width="2" height="2" fill="#62652f"/><rect x="736.8" y="121.9" width="2" height="2" fill="#62652f"/><rect x="742.9" y="130.9" width="2" height="2" fill="#62652f"/><rect x="775.2" y="136.3" width="2" height="2" fill="#62652f"/><rect x="703.8" y="137.9" width="2" height="2" fill="#62652f"/><rect x="714.2" y="137.9" width="2" height="2" fill="#62652f"/><rect x="705.5" y="145.5" width="2" height="2" fill="#62652f"/><rect x="740.8" y="146.2" width="2" height="2" fill="#62652f"/><rect x="713.5" y="155.8" width="2" height="2" fill="#62652f"/><rect x="778.7" y="172.1" width="2" height="2" fill="#62652f"/><rect x="690.2" y="167.6" width="2" height="2" fill="#62652f"/><rect x="711.8" y="168.6" width="2" height="2" fill="#62652f"/><rect x="674.6" y="173.7" width="2" height="2" fill="#62652f"/><rect x="683.8" y="176.8" width="2" height="2" fill="#62652f"/><rect x="695.6" y="188.1" width="2" height="2" fill="#62652f"/><rect x="765.3" y="189.8" width="2" height="2" fill="#62652f"/><rect x="675.8" y="202.5" width="2" height="2" fill="#62652f"/><rect x="692.1" y="201.5" width="2" height="2" fill="#62652f"/><rect x="750.0" y="199.9" width="2" height="2" fill="#62652f"/><rect x="768.8" y="199.0" width="2" height="2" fill="#62652f"/><rect x="766.0" y="206.0" width="2" height="2" fill="#62652f"/><rect x="776.9" y="207.0" width="2" height="2" fill="#62652f"/><rect x="672.5" y="214.7" width="2" height="2" fill="#62652f"/><rect x="660.7" y="218.7" width="2" height="2" fill="#62652f"/><rect x="733.0" y="215.7" width="2" height="2" fill="#62652f"/><rect x="690.2" y="224.6" width="2" height="2" fill="#62652f"/><rect x="816.2" y="110.4" width="2" height="2" fill="#62652f"/><rect x="826.1" y="113.9" width="2" height="2" fill="#62652f"/><rect x="821.6" y="119.6" width="2" height="2" fill="#62652f"/><rect x="832.5" y="115.8" width="2" height="2" fill="#62652f"/><rect x="855.6" y="125.7" width="2" height="2" fill="#62652f"/><rect x="862.9" y="133.0" width="2" height="2" fill="#62652f"/><rect x="860.0" y="137.2" width="2" height="2" fill="#62652f"/><rect x="872.1" y="140.8" width="2" height="2" fill="#62652f"/><rect x="810.3" y="140.8" width="2" height="2" fill="#62652f"/><rect x="888.5" y="154.9" width="2" height="2" fill="#62652f"/><rect x="840.2" y="157.7" width="2" height="2" fill="#62652f"/><rect x="892.1" y="165.0" width="2" height="2" fill="#62652f"/><rect x="892.1" y="169.5" width="2" height="2" fill="#62652f"/><rect x="805.6" y="162.2" width="2" height="2" fill="#62652f"/><rect x="838.4" y="170.2" width="2" height="2" fill="#62652f"/><rect x="898.4" y="179.9" width="2" height="2" fill="#62652f"/><rect x="861.7" y="185.5" width="2" height="2" fill="#62652f"/><rect x="865.2" y="196.8" width="2" height="2" fill="#62652f"/><rect x="908.8" y="196.1" width="2" height="2" fill="#62652f"/><rect x="908.1" y="206.7" width="2" height="2" fill="#62652f"/><rect x="908.6" y="213.3" width="2" height="2" fill="#62652f"/><rect x="869.9" y="218.7" width="2" height="2" fill="#62652f"/><rect x="907.9" y="229.3" width="2" height="2" fill="#62652f"/><rect x="874.4" y="236.2" width="2" height="2" fill="#62652f"/><rect x="674.1" y="240.0" width="2" height="2" fill="#62652f"/><rect x="686.6" y="240.9" width="2" height="2" fill="#62652f"/><rect x="674.1" y="253.4" width="2" height="2" fill="#62652f"/><rect x="699.4" y="260.7" width="2" height="2" fill="#62652f"/><rect x="726.2" y="241.9" width="2" height="2" fill="#62652f"/><rect x="663.5" y="268.7" width="2" height="2" fill="#62652f"/><rect x="684.0" y="277.4" width="2" height="2" fill="#62652f"/><rect x="696.5" y="281.0" width="2" height="2" fill="#62652f"/><rect x="734.9" y="270.4" width="2" height="2" fill="#62652f"/><rect x="720.8" y="288.3" width="2" height="2" fill="#62652f"/><rect x="689.2" y="291.8" width="2" height="2" fill="#62652f"/><rect x="758.0" y="292.7" width="2" height="2" fill="#62652f"/><rect x="788.6" y="300.7" width="2" height="2" fill="#62652f"/><rect x="779.7" y="307.8" width="2" height="2" fill="#62652f"/><rect x="749.8" y="304.3" width="2" height="2" fill="#62652f"/><rect x="706.2" y="310.6" width="2" height="2" fill="#62652f"/><rect x="687.6" y="315.6" width="2" height="2" fill="#62652f"/><rect x="724.1" y="317.7" width="2" height="2" fill="#62652f"/><rect x="716.8" y="322.9" width="2" height="2" fill="#62652f"/><rect x="740.1" y="335.6" width="2" height="2" fill="#62652f"/><rect x="755.7" y="343.6" width="2" height="2" fill="#62652f"/><rect x="767.0" y="338.9" width="2" height="2" fill="#62652f"/><rect x="780.4" y="347.2" width="2" height="2" fill="#62652f"/><rect x="728.8" y="349.7" width="2" height="2" fill="#62652f"/><rect x="782.3" y="365.8" width="2" height="2" fill="#62652f"/><rect x="912.8" y="242.8" width="2" height="2" fill="#62652f"/><rect x="863.8" y="250.8" width="2" height="2" fill="#62652f"/><rect x="905.5" y="261.6" width="2" height="2" fill="#62652f"/><rect x="846.8" y="277.4" width="2" height="2" fill="#62652f"/><rect x="859.1" y="273.9" width="2" height="2" fill="#62652f"/><rect x="896.8" y="279.5" width="2" height="2" fill="#62652f"/><rect x="897.5" y="287.6" width="2" height="2" fill="#62652f"/><rect x="819.8" y="295.3" width="2" height="2" fill="#62652f"/><rect x="831.3" y="295.3" width="2" height="2" fill="#62652f"/><rect x="805.4" y="303.3" width="2" height="2" fill="#62652f"/><rect x="884.1" y="304.3" width="2" height="2" fill="#62652f"/><rect x="863.8" y="318.6" width="2" height="2" fill="#62652f"/><rect x="866.4" y="322.9" width="2" height="2" fill="#62652f"/><rect x="848.5" y="335.6" width="2" height="2" fill="#62652f"/><rect x="816.7" y="339.8" width="2" height="2" fill="#62652f"/><rect x="826.1" y="343.6" width="2" height="2" fill="#62652f"/><rect x="801.9" y="348.8" width="2" height="2" fill="#62652f"/><rect x="838.6" y="357.8" width="2" height="2" fill="#62652f"/><rect x="1068.1" y="592.0" width="2" height="2" fill="#62652f"/><rect x="1079.8" y="603.8" width="2" height="2" fill="#62652f"/><rect x="1084.1" y="604.6" width="2" height="2" fill="#62652f"/><rect x="1088.9" y="606.4" width="2" height="2" fill="#62652f"/><rect x="1091.4" y="610.9" width="2" height="2" fill="#62652f"/><rect x="1066.4" y="613.5" width="2" height="2" fill="#62652f"/><rect x="1046.7" y="616.2" width="2" height="2" fill="#62652f"/><rect x="1041.2" y="617.9" width="2" height="2" fill="#62652f"/><rect x="1097.8" y="621.4" width="2" height="2" fill="#62652f"/><rect x="1021.7" y="624.9" width="2" height="2" fill="#62652f"/><rect x="1026.0" y="628.8" width="2" height="2" fill="#62652f"/><rect x="1038.0" y="627.8" width="2" height="2" fill="#62652f"/><rect x="1086.0" y="630.3" width="2" height="2" fill="#62652f"/><rect x="1094.9" y="629.2" width="2" height="2" fill="#62652f"/><rect x="1014.4" y="634.8" width="2" height="2" fill="#62652f"/><rect x="1128.4" y="634.8" width="2" height="2" fill="#62652f"/><rect x="1077.0" y="637.4" width="2" height="2" fill="#62652f"/><rect x="1100.2" y="639.4" width="2" height="2" fill="#62652f"/><rect x="1028.8" y="644.0" width="2" height="2" fill="#62652f"/><rect x="1050.3" y="644.0" width="2" height="2" fill="#62652f"/><rect x="1057.3" y="644.7" width="2" height="2" fill="#62652f"/><rect x="1102.0" y="647.6" width="2" height="2" fill="#62652f"/><rect x="1062.0" y="651.8" width="2" height="2" fill="#62652f"/><rect x="1023.6" y="660.7" width="2" height="2" fill="#62652f"/><rect x="1073.6" y="660.7" width="2" height="2" fill="#62652f"/><rect x="1053.0" y="663.5" width="2" height="2" fill="#62652f"/><rect x="1115.7" y="661.7" width="2" height="2" fill="#62652f"/><rect x="1075.1" y="670.9" width="2" height="2" fill="#62652f"/><rect x="1082.2" y="670.9" width="2" height="2" fill="#62652f"/><rect x="1109.4" y="671.6" width="2" height="2" fill="#62652f"/><rect x="1030.6" y="676.8" width="2" height="2" fill="#62652f"/><rect x="1039.7" y="680.3" width="2" height="2" fill="#62652f"/><rect x="1055.8" y="684.7" width="2" height="2" fill="#62652f"/><rect x="1064.8" y="686.8" width="2" height="2" fill="#62652f"/><rect x="1106.5" y="686.8" width="2" height="2" fill="#62652f"/><rect x="1120.1" y="682.2" width="2" height="2" fill="#62652f"/><rect x="1121.8" y="688.5" width="2" height="2" fill="#62652f"/><rect x="1117.8" y="692.1" width="2" height="2" fill="#62652f"/><rect x="1093.0" y="690.2" width="2" height="2" fill="#62652f"/><rect x="1020.0" y="706.2" width="2" height="2" fill="#62652f"/><rect x="1112.9" y="706.2" width="2" height="2" fill="#62652f"/><rect x="1017.2" y="725.0" width="2" height="2" fill="#62652f"/><rect x="1034.9" y="720.8" width="2" height="2" fill="#62652f"/><rect x="1043.9" y="718.8" width="2" height="2" fill="#62652f"/><rect x="1048.7" y="716.8" width="2" height="2" fill="#62652f"/><rect x="1058.9" y="724.1" width="2" height="2" fill="#62652f"/><rect x="1111.0" y="728.7" width="2" height="2" fill="#62652f"/><rect x="1124.6" y="726.9" width="2" height="2" fill="#62652f"/><rect x="1127.0" y="744.8" width="2" height="2" fill="#62652f"/><rect x="1032.3" y="763.5" width="2" height="2" fill="#62652f"/><rect x="1070.8" y="777.8" width="2" height="2" fill="#62652f"/><rect x="1182.3" y="530.5" width="2" height="2" fill="#62652f"/><rect x="1175.3" y="534.7" width="2" height="2" fill="#62652f"/><rect x="1168.9" y="540.1" width="2" height="2" fill="#62652f"/><rect x="1177.9" y="540.9" width="2" height="2" fill="#62652f"/><rect x="1187.0" y="541.8" width="2" height="2" fill="#62652f"/><rect x="1190.0" y="542.9" width="2" height="2" fill="#62652f"/><rect x="1162.8" y="549.0" width="2" height="2" fill="#62652f"/><rect x="1184.2" y="550.8" width="2" height="2" fill="#62652f"/><rect x="1180.8" y="559.9" width="2" height="2" fill="#62652f"/><rect x="1166.3" y="565.1" width="2" height="2" fill="#62652f"/><rect x="1173.6" y="570.8" width="2" height="2" fill="#62652f"/><rect x="1164.7" y="579.5" width="2" height="2" fill="#62652f"/><rect x="1171.9" y="581.2" width="2" height="2" fill="#62652f"/><rect x="1193.1" y="567.8" width="2" height="2" fill="#62652f"/><rect x="1195.7" y="571.6" width="2" height="2" fill="#62652f"/><rect x="1198.9" y="574.0" width="2" height="2" fill="#62652f"/><rect x="1204.8" y="575.9" width="2" height="2" fill="#62652f"/><rect x="1210.9" y="569.8" width="2" height="2" fill="#62652f"/><rect x="1213.7" y="576.8" width="2" height="2" fill="#62652f"/><rect x="1207.8" y="562.4" width="2" height="2" fill="#62652f"/><rect x="1216.2" y="557.1" width="2" height="2" fill="#62652f"/><rect x="1219.9" y="553.8" width="2" height="2" fill="#62652f"/><rect x="1218.2" y="538.4" width="2" height="2" fill="#62652f"/><rect x="1222.9" y="539.2" width="2" height="2" fill="#62652f"/><rect x="1225.3" y="540.9" width="2" height="2" fill="#62652f"/><rect x="1231.7" y="535.9" width="2" height="2" fill="#62652f"/><rect x="1227.1" y="561.7" width="2" height="2" fill="#62652f"/><rect x="1229.0" y="565.1" width="2" height="2" fill="#62652f"/><rect x="1234.2" y="559.9" width="2" height="2" fill="#62652f"/><rect x="1236.0" y="571.2" width="2" height="2" fill="#62652f"/><rect x="1160.0" y="599.0" width="2" height="2" fill="#62652f"/><rect x="1148.4" y="610.8" width="2" height="2" fill="#62652f"/><rect x="1157.4" y="622.4" width="2" height="2" fill="#62652f"/><rect x="1131.0" y="636.0" width="2" height="2" fill="#62652f"/><rect x="1139.8" y="644.7" width="2" height="2" fill="#62652f"/><rect x="1202.0" y="646.6" width="2" height="2" fill="#62652f"/><rect x="1154.1" y="660.8" width="2" height="2" fill="#62652f"/><rect x="1133.1" y="666.1" width="2" height="2" fill="#62652f"/><rect x="1146.8" y="677.0" width="2" height="2" fill="#62652f"/><rect x="1137.8" y="683.0" width="2" height="2" fill="#62652f"/><rect x="1151.2" y="689.2" width="2" height="2" fill="#62652f"/><rect x="1144.9" y="729.7" width="2" height="2" fill="#62652f"/><rect x="1155.7" y="733.1" width="2" height="2" fill="#62652f"/><rect x="1142.2" y="739.5" width="2" height="2" fill="#62652f"/><rect x="1136.0" y="791.3" width="2" height="2" fill="#62652f"/><rect x="1013.5" y="73.3" width="2" height="2" fill="#62652f"/><rect x="1015.5" y="74.0" width="2" height="2" fill="#62652f"/><rect x="1017.2" y="74.7" width="2" height="2" fill="#62652f"/><rect x="1019.9" y="78.4" width="2" height="2" fill="#62652f"/><rect x="1021.9" y="82.1" width="2" height="2" fill="#62652f"/><rect x="1023.8" y="87.3" width="2" height="2" fill="#62652f"/><rect x="1026.1" y="90.8" width="2" height="2" fill="#62652f"/><rect x="1029.0" y="94.3" width="2" height="2" fill="#62652f"/><rect x="1031.3" y="97.1" width="2" height="2" fill="#62652f"/><rect x="1034.6" y="97.1" width="2" height="2" fill="#62652f"/><rect x="1037.9" y="94.3" width="2" height="2" fill="#62652f"/><rect x="1039.9" y="92.6" width="2" height="2" fill="#62652f"/><rect x="1041.7" y="90.0" width="2" height="2" fill="#62652f"/><rect x="1044.3" y="88.1" width="2" height="2" fill="#62652f"/><rect x="1047.3" y="87.3" width="2" height="2" fill="#62652f"/><rect x="1048.8" y="88.2" width="2" height="2" fill="#62652f"/><rect x="1050.3" y="90.8" width="2" height="2" fill="#62652f"/><rect x="1052.9" y="94.3" width="2" height="2" fill="#62652f"/><rect x="1055.8" y="100.6" width="2" height="2" fill="#62652f"/><rect x="1057.6" y="107.0" width="2" height="2" fill="#62652f"/><rect x="1059.1" y="113.2" width="2" height="2" fill="#62652f"/><rect x="1062.0" y="118.7" width="2" height="2" fill="#62652f"/><rect x="1064.7" y="123.0" width="2" height="2" fill="#62652f"/><rect x="1067.2" y="126.4" width="2" height="2" fill="#62652f"/><rect x="1070.9" y="126.7" width="2" height="2" fill="#62652f"/><rect x="1073.5" y="126.1" width="2" height="2" fill="#62652f"/><rect x="1077.0" y="126.1" width="2" height="2" fill="#62652f"/><rect x="1080.0" y="126.7" width="2" height="2" fill="#62652f"/><rect x="1082.3" y="128.5" width="2" height="2" fill="#62652f"/><rect x="1084.1" y="132.0" width="2" height="2" fill="#62652f"/><rect x="1086.2" y="135.9" width="2" height="2" fill="#62652f"/><rect x="1088.8" y="141.8" width="2" height="2" fill="#62652f"/><rect x="1091.3" y="151.9" width="2" height="2" fill="#62652f"/><rect x="1093.0" y="164.1" width="2" height="2" fill="#62652f"/><rect x="1094.9" y="181.1" width="2" height="2" fill="#62652f"/><rect x="1097.8" y="205.1" width="2" height="2" fill="#62652f"/><rect x="1100.3" y="240.0" width="2" height="2" fill="#62652f"/><rect x="1101.9" y="290.0" width="2" height="2" fill="#62652f"/><rect x="1104.9" y="309.5" width="2" height="2" fill="#62652f"/><rect x="1106.5" y="256.7" width="2" height="2" fill="#62652f"/><rect x="1109.3" y="213.1" width="2" height="2" fill="#62652f"/><rect x="1110.9" y="180.4" width="2" height="2" fill="#62652f"/><rect x="1112.8" y="155.2" width="2" height="2" fill="#62652f"/><rect x="1115.4" y="138.2" width="2" height="2" fill="#62652f"/><rect x="1118.0" y="125.8" width="2" height="2" fill="#62652f"/><rect x="1120.6" y="119.4" width="2" height="2" fill="#62652f"/><rect x="1123.0" y="119.4" width="2" height="2" fill="#62652f"/><rect x="1124.6" y="124.8" width="2" height="2" fill="#62652f"/><rect x="1127.0" y="128.3" width="2" height="2" fill="#62652f"/><rect x="1128.8" y="127.4" width="2" height="2" fill="#62652f"/><rect x="1130.7" y="124.8" width="2" height="2" fill="#62652f"/><rect x="1133.6" y="122.2" width="2" height="2" fill="#62652f"/><rect x="1135.9" y="120.3" width="2" height="2" fill="#62652f"/><rect x="1138.7" y="118.9" width="2" height="2" fill="#62652f"/><rect x="1142.3" y="115.1" width="2" height="2" fill="#62652f"/><rect x="1144.9" y="111.6" width="2" height="2" fill="#62652f"/><rect x="1147.0" y="107.1" width="2" height="2" fill="#62652f"/><rect x="1148.6" y="101.9" width="2" height="2" fill="#62652f"/><rect x="1151.1" y="97.2" width="2" height="2" fill="#62652f"/><rect x="1153.9" y="92.0" width="2" height="2" fill="#62652f"/><rect x="1155.8" y="87.3" width="2" height="2" fill="#62652f"/><rect x="1158.3" y="85.4" width="2" height="2" fill="#62652f"/><rect x="1160.9" y="84.4" width="2" height="2" fill="#62652f"/><rect x="1163.0" y="84.6" width="2" height="2" fill="#62652f"/><rect x="1164.4" y="86.3" width="2" height="2" fill="#62652f"/><rect x="1166.5" y="89.2" width="2" height="2" fill="#62652f"/><rect x="1169.2" y="92.9" width="2" height="2" fill="#62652f"/><rect x="1171.8" y="96.2" width="2" height="2" fill="#62652f"/><rect x="1173.7" y="99.1" width="2" height="2" fill="#62652f"/><rect x="1175.6" y="101.9" width="2" height="2" fill="#62652f"/><rect x="1178.1" y="102.8" width="2" height="2" fill="#62652f"/><rect x="1180.5" y="102.5" width="2" height="2" fill="#62652f"/><rect x="1182.4" y="100.5" width="2" height="2" fill="#62652f"/><rect x="1184.2" y="98.1" width="2" height="2" fill="#62652f"/><rect x="1186.9" y="95.3" width="2" height="2" fill="#62652f"/><rect x="1189.9" y="92.0" width="2" height="2" fill="#62652f"/><rect x="1191.6" y="88.2" width="2" height="2" fill="#62652f"/><rect x="1193.2" y="85.9" width="2" height="2" fill="#62652f"/><rect x="1196.0" y="84.0" width="2" height="2" fill="#62652f"/><rect x="1199.8" y="84.0" width="2" height="2" fill="#62652f"/><rect x="1202.0" y="86.3" width="2" height="2" fill="#62652f"/><rect x="1205.0" y="89.2" width="2" height="2" fill="#62652f"/><rect x="1207.6" y="92.7" width="2" height="2" fill="#62652f"/><rect x="1209.2" y="95.3" width="2" height="2" fill="#62652f"/><rect x="1211.1" y="99.1" width="2" height="2" fill="#62652f"/><rect x="1213.9" y="101.9" width="2" height="2" fill="#62652f"/><rect x="1216.3" y="103.3" width="2" height="2" fill="#62652f"/><rect x="1218.6" y="104.2" width="2" height="2" fill="#62652f"/><rect x="1220.2" y="103.3" width="2" height="2" fill="#62652f"/><rect x="1222.9" y="101.9" width="2" height="2" fill="#62652f"/><rect x="1225.2" y="99.1" width="2" height="2" fill="#62652f"/><rect x="1227.1" y="95.3" width="2" height="2" fill="#62652f"/><rect x="1229.0" y="92.7" width="2" height="2" fill="#62652f"/><rect x="1231.8" y="89.6" width="2" height="2" fill="#62652f"/><rect x="1234.2" y="88.2" width="2" height="2" fill="#62652f"/><rect x="1236.3" y="86.3" width="2" height="2" fill="#62652f"/></svg><svg style="position:absolute;left:0;top:0" width="1280" height="849"><path d="M771.0 210.5 L778.8 210.5 L774.9 217.8 Z" fill="none" stroke="#d42a3a" stroke-width="1.1" stroke-linejoin="miter"/><rect x="774.1" y="212.3" width="1.6" height="1.6" fill="#6a6a50"/><path d="M882.5 327.5 L890.3 327.5 L886.4 334.8 Z" fill="none" stroke="#221c90" stroke-width="1.1" stroke-linejoin="miter"/><rect x="885.6" y="329.3" width="1.6" height="1.6" fill="#6a6a50"/><path d="M1101.6 306.6 L1109.4 306.6 L1105.5 313.9 Z" fill="none" stroke="#d42a3a" stroke-width="1.1" stroke-linejoin="miter"/><rect x="1104.7" y="308.4" width="1.6" height="1.6" fill="#6a6a50"/><path d="M1010.4 70.4 L1018.2 70.4 L1014.3 77.7 Z" fill="none" stroke="#221c90" stroke-width="1.1" stroke-linejoin="miter"/><rect x="1013.5" y="72.2" width="1.6" height="1.6" fill="#6a6a50"/><path d="M1101.3 666.6 L1109.1 666.6 L1105.2 673.9 Z" fill="none" stroke="#d42a3a" stroke-width="1.1" stroke-linejoin="miter"/><rect x="1104.4" y="668.4" width="1.6" height="1.6" fill="#6a6a50"/><path d="M1010.2 710.6 L1018.0 710.6 L1014.1 717.9 Z" fill="none" stroke="#221c90" stroke-width="1.1" stroke-linejoin="miter"/><rect x="1013.3" y="712.4" width="1.6" height="1.6" fill="#6a6a50"/><path d="M780.1 621.5 L787.9 621.5 L784.0 628.8 Z" fill="none" stroke="#3a1050" stroke-width="1.5" stroke-linejoin="miter"/><rect x="783.2" y="623.3" width="1.6" height="1.6" fill="#6a6a50"/></svg><svg style="position:absolute;left:0;top:0" width="1280" height="849"><rect x="577" y="417" width="1" height="1" fill="#b8b8b8"/><rect x="577" y="420" width="1" height="1" fill="#b8b8b8"/><rect x="577" y="423" width="1" height="1" fill="#b8b8b8"/><rect x="577" y="426" width="1" height="1" fill="#b8b8b8"/><rect x="577" y="429" width="1" height="1" fill="#b8b8b8"/><rect x="577" y="431" width="1" height="1" fill="#b8b8b8"/></svg><div style="position:absolute;left:602px;top:824px;width:79px;height:30px;background:#373737;border-radius:4.5px"></div><svg style="position:absolute;left:602px;top:824.6px" width="79" height="25" viewBox="0 0 79 25">
<path d="M23.4 22.8 A5.8 5.8 0 1 0 15.3 19.6" fill="none" stroke="#fff" stroke-width="1.7"/>
<path d="M12.2 18.0 L18.4 18.2 L14.6 22.6 Z" fill="#fff"/>
<path d="M55.2 22.8 A5.8 5.8 0 1 1 63.3 19.6" fill="none" stroke="#fff" stroke-width="1.7"/>
<path d="M66.4 18.0 L60.2 18.2 L64.0 22.6 Z" fill="#fff"/>
</svg>
</body></html>
